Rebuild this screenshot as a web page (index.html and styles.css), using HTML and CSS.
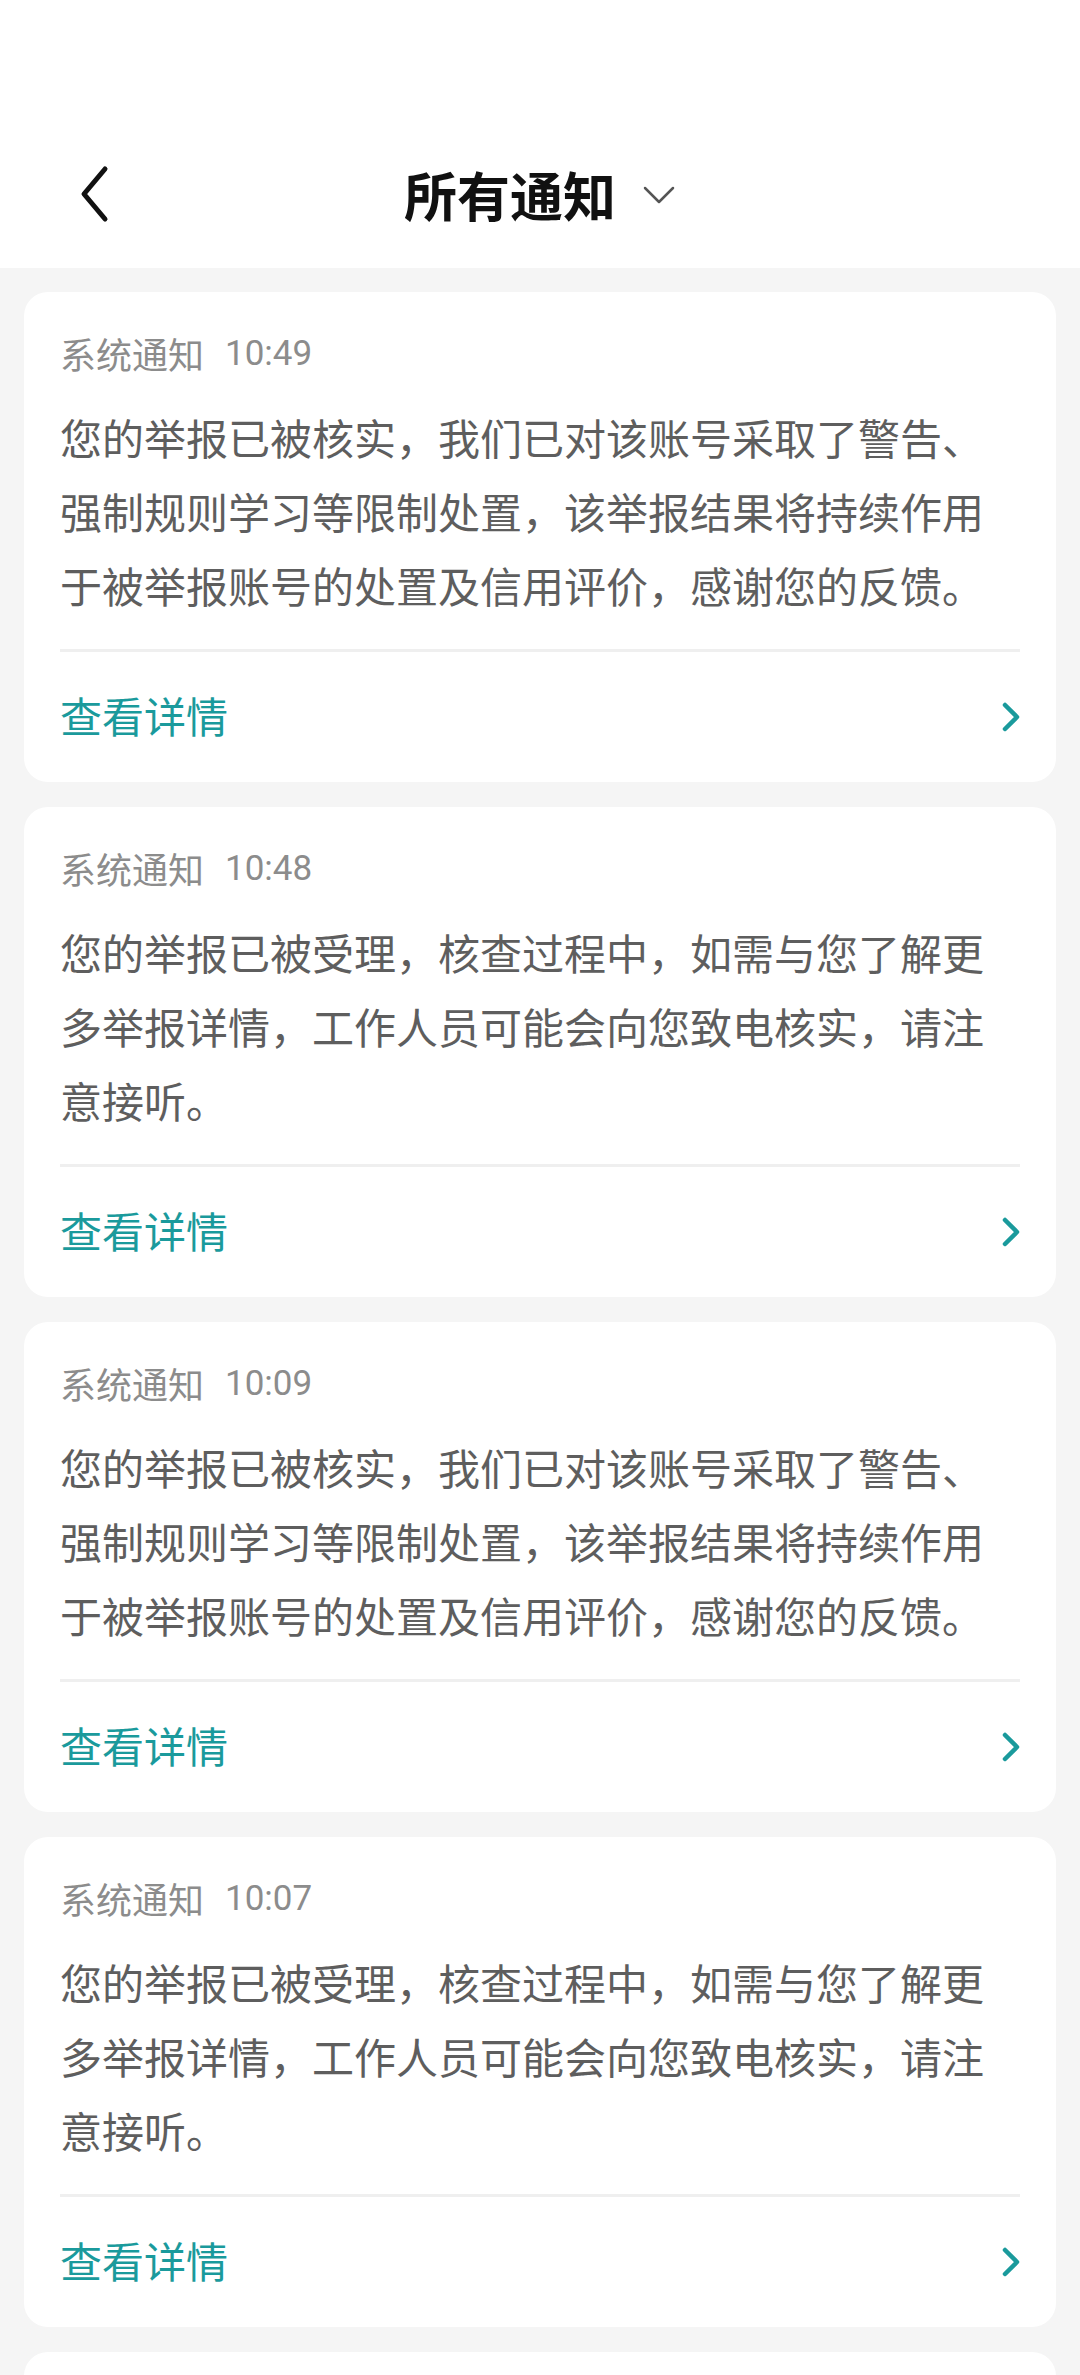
FILE: index.html
```html
<!DOCTYPE html>
<html lang="zh-CN">
<head>
<meta charset="utf-8">
<title>所有通知</title>
<link rel="stylesheet" href="styles.css">
</head>
<body>
<header class="topbar">
  <div class="nav">
    <div class="nav-left">
      <svg class="back" width="32" height="58" viewBox="0 0 32 58"><path d="M27 4 L6 29 L27 54" fill="none" stroke="#111" stroke-width="5" stroke-linecap="round" stroke-linejoin="round"/></svg>
    </div>
    <div class="title">
      <span class="title-text">所有通知</span>
      <svg class="drop" width="34" height="20" viewBox="0 0 34 20"><path d="M3 3 L17 17 L31 3" fill="none" stroke="#555" stroke-width="2.5" stroke-linecap="round" stroke-linejoin="round"/></svg>
    </div>
    <div class="nav-right"></div>
  </div>
</header>
<main class="list">
  <section class="card">
    <div class="meta"><span>系统通知</span><span class="time">10:49</span></div>
    <p class="body">您的举报已被核实，我们已对该账号采取了警告、强制规则学习等限制处置，该举报结果将持续作用于被举报账号的处置及信用评价，感谢您的反馈。</p>
    <div class="divider"></div>
    <div class="link-row"><span class="link">查看详情</span><svg class="arrow" width="22" height="32" viewBox="0 0 22 32"><path d="M5 4 L17 16 L5 28" fill="none" stroke="#1a9a9c" stroke-width="4.5" stroke-linecap="round" stroke-linejoin="round"/></svg></div>
  </section>
  <section class="card">
    <div class="meta"><span>系统通知</span><span class="time">10:48</span></div>
    <p class="body">您的举报已被受理，核查过程中，如需与您了解更多举报详情，工作人员可能会向您致电核实，请注意接听。</p>
    <div class="divider"></div>
    <div class="link-row"><span class="link">查看详情</span><svg class="arrow" width="22" height="32" viewBox="0 0 22 32"><path d="M5 4 L17 16 L5 28" fill="none" stroke="#1a9a9c" stroke-width="4.5" stroke-linecap="round" stroke-linejoin="round"/></svg></div>
  </section>
  <section class="card">
    <div class="meta"><span>系统通知</span><span class="time">10:09</span></div>
    <p class="body">您的举报已被核实，我们已对该账号采取了警告、强制规则学习等限制处置，该举报结果将持续作用于被举报账号的处置及信用评价，感谢您的反馈。</p>
    <div class="divider"></div>
    <div class="link-row"><span class="link">查看详情</span><svg class="arrow" width="22" height="32" viewBox="0 0 22 32"><path d="M5 4 L17 16 L5 28" fill="none" stroke="#1a9a9c" stroke-width="4.5" stroke-linecap="round" stroke-linejoin="round"/></svg></div>
  </section>
  <section class="card">
    <div class="meta"><span>系统通知</span><span class="time">10:07</span></div>
    <p class="body">您的举报已被受理，核查过程中，如需与您了解更多举报详情，工作人员可能会向您致电核实，请注意接听。</p>
    <div class="divider"></div>
    <div class="link-row"><span class="link">查看详情</span><svg class="arrow" width="22" height="32" viewBox="0 0 22 32"><path d="M5 4 L17 16 L5 28" fill="none" stroke="#1a9a9c" stroke-width="4.5" stroke-linecap="round" stroke-linejoin="round"/></svg></div>
  </section>
  <section class="card card-peek"></section>
</main>
</body>
</html>
```

FILE: styles.css
```css
* { box-sizing: border-box; }
html, body {
  margin: 0;
  padding: 0;
  background: #f5f5f5;
  font-family: Roboto, "Noto Sans CJK SC", sans-serif;
}
body {
  height: 2375px;
  overflow: hidden;
}
.topbar {
  background: #ffffff;
  height: 268px;
  padding-top: 146px;
}
.nav {
  height: 96px;
  display: grid;
  grid-template-columns: 1fr auto 1fr;
  align-items: center;
}
.nav-left {
  padding-left: 78px;
  display: flex;
  align-items: center;
}
.back { display: block; }
.title {
  display: flex;
  align-items: center;
  gap: 26px;
}
.title-text {
  font-family: "Noto Sans CJK SC", sans-serif;
  font-weight: 700;
  font-size: 53px;
  line-height: 1;
  color: #111111;
}
.drop { display: block; margin-top: 2px; }
.list {
  padding: 24px 24px 0;
  display: flex;
  flex-direction: column;
  gap: 25px;
}
.card {
  background: #ffffff;
  border-radius: 24px;
  padding: 37px 36px 0;
  height: 490px;
  flex-shrink: 0;
}
.meta {
  display: flex;
  align-items: center;
  gap: 21px;
  height: 48px;
  font-size: 36px;
  color: #8c8c8c;
  font-family: "Noto Sans CJK SC", sans-serif;
}
.meta .time {
  font-family: Roboto, sans-serif;
  font-size: 35px;
}
.body {
  margin: 23px 0 0;
  font-family: "Noto Sans CJK SC", sans-serif;
  font-size: 42px;
  line-height: 74px;
  color: #5e5e5e;
  height: 222px;
}
.divider {
  margin-top: 27px;
  height: 3px;
  background: #efefef;
}
.link-row {
  height: 130px;
  padding-bottom: 6px;
  display: flex;
  align-items: center;
  justify-content: space-between;
}
.link {
  font-family: "Noto Sans CJK SC", sans-serif;
  font-size: 42px;
  color: #1a9a9c;
}
.arrow { display: block; margin-top: 6px; margin-right: -2px; }
```
